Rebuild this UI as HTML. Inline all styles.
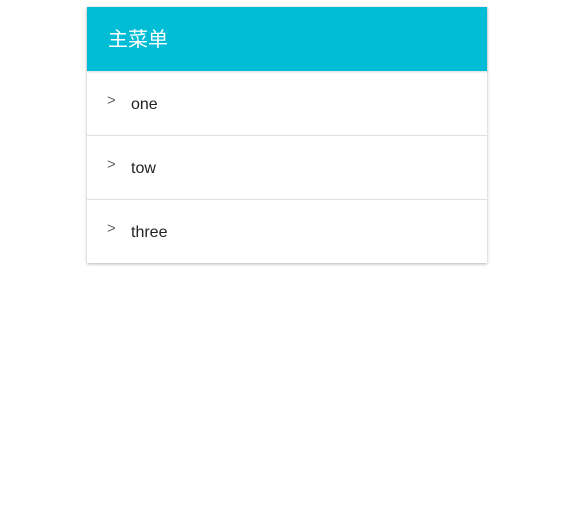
<!DOCTYPE html>
<html><head><meta charset="utf-8"><style>
html,body{margin:0;padding:0;background:#fff;width:580px;height:532px;overflow:hidden;font-family:"Liberation Sans","Noto Sans CJK SC",sans-serif;}
.card{position:absolute;left:87px;top:7px;width:400px;box-shadow:0 1px 3px rgba(0,0,0,.3);background:#fff;}
.hd{height:64px;background:#00bcd4;color:#fff;font-size:20px;line-height:66px;padding-left:21px;box-shadow:0 1px 2px rgba(0,0,0,.15);position:relative;}
.row{height:63px;border-top:1px solid #e0e0e0;position:relative;font-size:16px;color:#222;}
.row .t{position:absolute;left:44px;top:24px}
.row .c{position:absolute;left:20px;top:20px;color:#666;font-size:15px}
</style></head><body>
<div class="card">
<div class="hd">主菜单</div>
<div style="height:1px"></div>
<div class="row" style="border-top:none"><span class="c">&gt;</span><span class="t">one</span></div>
<div class="row"><span class="c">&gt;</span><span class="t">tow</span></div>
<div class="row"><span class="c">&gt;</span><span class="t">three</span></div>
</div>
</body></html>
